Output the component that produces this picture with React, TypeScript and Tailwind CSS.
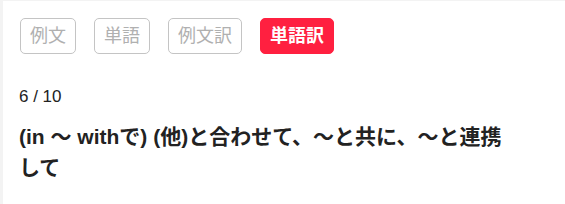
import { useState } from "react";

const modes = ["例文", "単語", "例文訳", "単語訳"];

export default function App() {
  const [active, setActive] = useState("単語訳");

  return (
    <div
      className="min-h-screen bg-[#f3f3f3] pl-[3px] pt-px"
      style={{ fontFamily: '"Liberation Sans", "Noto Sans CJK JP", sans-serif' }}
    >
      <div className="min-h-[203px] bg-white px-4 pt-[17px] pb-4">
        <div className="flex gap-[18px] pl-px">
          {modes.map((m) => (
            <button
              key={m}
              onClick={() => setActive(m)}
              className={
                m === active
                  ? "h-[36px] rounded-[5px] border border-[#ff2040] bg-[#ff2040] px-[9px] text-[18px] font-bold text-white"
                  : "h-[36px] rounded-[5px] border border-[#c4c4c4] bg-white px-[9px] text-[18px] text-[#b0b0b0]"
              }
            >
              {m}
            </button>
          ))}
        </div>

        <div className="mt-[31px] text-[17px] leading-6 text-[#222]">6 / 10</div>

        <h2 className="mt-[12px] pr-[36px] text-[21px] font-bold leading-[31px] text-[#222]">
          (in ～ withで) (他)と合わせて、～と共に、～と連携して
        </h2>
      </div>
    </div>
  );
}
